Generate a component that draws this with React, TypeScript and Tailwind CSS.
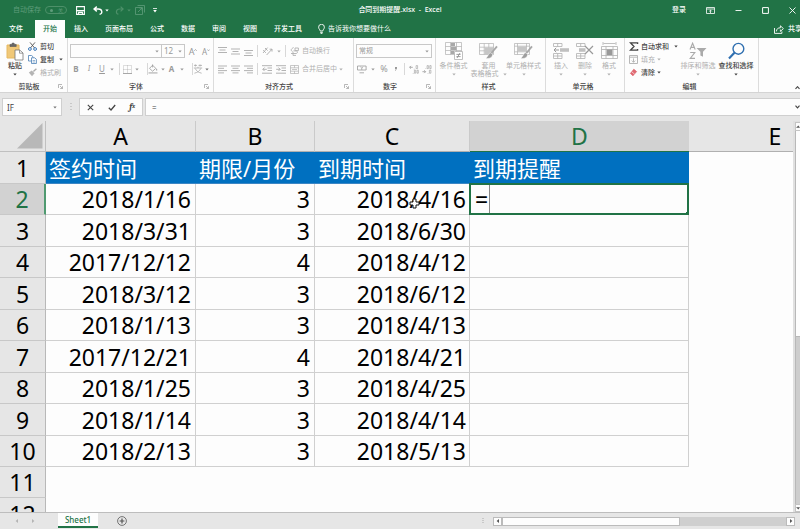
import type { ReactNode } from 'react';
import clsx from 'clsx';

type Row = { start: string; months: number; end: string };

const rows: Row[] = [
  { start: '2018/1/16', months: 3, end: '2018/4/16' },
  { start: '2018/3/31', months: 3, end: '2018/6/30' },
  { start: '2017/12/12', months: 4, end: '2018/4/12' },
  { start: '2018/3/12', months: 3, end: '2018/6/12' },
  { start: '2018/1/13', months: 3, end: '2018/4/13' },
  { start: '2017/12/21', months: 4, end: '2018/4/21' },
  { start: '2018/1/25', months: 3, end: '2018/4/25' },
  { start: '2018/1/14', months: 3, end: '2018/4/14' },
  { start: '2018/2/13', months: 3, end: '2018/5/13' },
];

const tabs = ['文件', '开始', '插入', '页面布局', '公式', '数据', '审阅', '视图', '开发工具'];

/* ---------- small drawing helpers ---------- */

function Icon({ w, h, children, className }: { w: number; h: number; children: ReactNode; className?: string }) {
  return (
    <svg
      width={w}
      height={h}
      viewBox={`0 0 ${w} ${h}`}
      fill="none"
      stroke="currentColor"
      strokeWidth="1"
      className={clsx('shrink-0', className)}
      aria-hidden="true"
    >
      {children}
    </svg>
  );
}

function Caret({ className }: { className?: string }) {
  return (
    <Icon w={4} h={3} className={className}>
      <path d="M0.3 0.5h3.4L2 2.6z" fill="currentColor" stroke="none" />
    </Icon>
  );
}

function Sep() {
  return <span className="h-3 w-px shrink-0 bg-[#d8d8d8]" />;
}

function Lines({ d }: { d: string }) {
  return (
    <Icon w={9} h={9}>
      <path d={d} strokeWidth="0.9" />
    </Icon>
  );
}

function IconButton({ label, children, className }: { label: string; children: ReactNode; className?: string }) {
  return (
    <button type="button" aria-label={label} className={clsx('flex shrink-0 items-center justify-center', className)}>
      {children}
    </button>
  );
}

/* ---------- ribbon ---------- */

type GroupProps = { title: string; width: string; launcher?: boolean; children: ReactNode };

function Group({ title, width, launcher, children }: GroupProps) {
  return (
    <section className={clsx('flex shrink-0 flex-col border-r border-[#dcdcdc]', width)} aria-label={title}>
      <div className="flex-1">{children}</div>
      <div className="flex h-[11px] items-center pr-1">
        <span className="flex-1 text-center font-medium text-[#444]">{title}</span>
        {launcher && (
          <IconButton label={`${title}设置`} className="text-[#999]">
            <Icon w={5} h={5}>
              <path d="M0.5 4V0.5H4M2 2l2.4 2.4M4.5 2.2v2.3H2.2" strokeWidth="0.7" />
            </Icon>
          </IconButton>
        )}
      </div>
    </section>
  );
}

type BigProps = { label: string; second?: string; width: string; active?: boolean; children: ReactNode };

function BigButton({ label, second, width, active, children }: BigProps) {
  return (
    <button
      type="button"
      className={clsx(
        'flex shrink-0 flex-col items-center whitespace-nowrap',
        width,
        active ? 'font-medium text-[#444]' : 'text-[#b0b0b0]',
      )}
    >
      <span className="mb-[2px] flex h-[18px] items-center">{children}</span>
      <span className="h-2">{label}</span>
      <span className="flex h-2 items-center gap-1">
        {second}
        <Caret />
      </span>
    </button>
  );
}

type SmallProps = { label: string; caret?: boolean; active?: boolean; wide?: boolean; children: ReactNode };

function SmallButton({ label, caret, active, wide, children }: SmallProps) {
  return (
    <button
      type="button"
      className={clsx(
        'flex h-[13px] items-center whitespace-nowrap',
        active ? 'font-medium text-[#444]' : 'text-[#b0b0b0]',
      )}
    >
      <span className="flex w-3 items-center">{children}</span>
      {label}
      {caret && <Caret className={wide ? 'ml-[5px]' : 'ml-[2px]'} />}
    </button>
  );
}

function ClipboardGroup() {
  return (
    <Group title="剪贴板" width="w-[68px]" launcher>
      <div className="flex pt-[2px]">
        <div className="pt-[2px] pl-1">
          <BigButton label="粘贴" width="w-[22px]" active>
            <Icon w={18} h={19}>
              <path d="M1 3h12v13H1z" fill="#f0c878" stroke="#e6b860" />
              <path d="M4 4.5V2.4h1.7a1.4 1.4 0 0 1 2.8 0h1.7v2.1z" fill="#666" stroke="#555" strokeWidth="0.6" />
              <path d="M9 8h4.7L17 11v7H9z" fill="#fff" stroke="#777" strokeWidth="0.8" />
              <path d="M13.5 8v3.2H17" stroke="#777" strokeWidth="0.7" />
            </Icon>
          </BigButton>
        </div>
        <div className="pl-[2px]">
          <SmallButton label="剪切" active>
            <Icon w={9} h={9}>
              <path d="M2 0.4 6.6 6M7 0.4 2.4 6" stroke="#555" strokeWidth="0.9" />
              <circle cx="1.9" cy="7" r="1.4" stroke="#3b78b8" />
              <circle cx="7.1" cy="7" r="1.4" stroke="#3b78b8" />
            </Icon>
          </SmallButton>
          <SmallButton label="复制" caret wide active>
            <Icon w={9} h={9}>
              <path d="M0.5 0.5h3.2L5 1.8V6H0.5z" fill="#fff" stroke="#4a7fb5" strokeWidth="0.8" />
              <path d="M3.5 2.8h3.2L8.4 4.3v4.2H3.5z" fill="#fff" stroke="#4a7fb5" strokeWidth="0.8" />
              <path d="M4.6 5.5h2.6M4.6 7h2.6" stroke="#4a7fb5" strokeWidth="0.6" />
            </Icon>
          </SmallButton>
          <SmallButton label="格式刷">
            <Icon w={9} h={9}>
              <path d="M8.4 0.8 5.4 3.6" stroke="#aaa" strokeWidth="1.4" />
              <path d="M3.8 2.4 6.6 5.2 4 8.2 0.8 4.6z" fill="#b4b4b4" stroke="none" />
            </Icon>
          </SmallButton>
        </div>
      </div>
    </Group>
  );
}

function FontGroup() {
  return (
    <Group title="字体" width="w-[146px]" launcher>
      <div className="flex h-5 items-end pl-[2px] text-[#999]">
        <div className="relative w-[92px]">
          <select aria-label="字体名称" className="block h-[14px] w-full appearance-none border border-[#c8c8c8] bg-transparent" />
          <Caret className="pointer-events-none absolute top-[6px] right-[3px]" />
        </div>
        <div className="relative -ml-px w-6">
          <select
            aria-label="字号"
            className="block h-[14px] w-full appearance-none border border-[#c8c8c8] bg-transparent pl-[2px] text-[8px] leading-3"
          >
            <option>12</option>
          </select>
          <Caret className="pointer-events-none absolute top-[6px] right-[3px]" />
        </div>
        <IconButton label="增大字号" className="ml-1 h-[13px] w-2 text-[9px]">
          A
          <Icon w={3} h={6}>
            <path d="M0.3 1.8 1.5 0.5 2.7 1.8" strokeWidth="0.8" />
          </Icon>
        </IconButton>
        <IconButton label="减小字号" className="ml-[5px] h-[13px] w-2 text-[8px]">
          A
          <Icon w={3} h={6}>
            <path d="M0.3 0.5 1.5 1.8 2.7 0.5" strokeWidth="0.8" />
          </Icon>
        </IconButton>
      </div>
      <div className="mt-1 flex h-[14px] items-center text-[8px] text-[#999]">
        <IconButton label="加粗" className="ml-[5px] w-[6px] font-bold">B</IconButton>
        <IconButton label="倾斜" className="ml-[7px] w-[6px] font-serif italic">I</IconButton>
        <IconButton label="下划线" className="ml-[7px] w-[6px] underline">U</IconButton>
        <Caret className="mr-[5px] ml-[5px]" />
        <Sep />
        <IconButton label="边框" className="ml-[3px]">
          <Icon w={9} h={9}>
            <path d="M0.5 0.5h8v8h-8zM4.5 0.5v8M0.5 4.5h8" strokeWidth="0.6" strokeDasharray="1 1" />
            <path d="M0 8.5h9" strokeWidth="0.8" />
          </Icon>
        </IconButton>
        <Caret className="mr-2 ml-[3px]" />
        <Sep />
        <IconButton label="填充颜色">
          <Icon w={10} h={10}>
            <path d="M1.5 4.4 4.6 1.2l3.2 3.2-3.2 2.8zM4.6 3.4V0.4" strokeWidth="0.8" />
            <path d="M8.7 4.4c.8 1 .8 2 0 2.2s-.8-1.2 0-2.2z" fill="currentColor" stroke="none" />
            <path d="M0.5 8.9h9" stroke="#c4c4c4" strokeWidth="1.6" />
          </Icon>
        </IconButton>
        <Caret className="mr-[3px] ml-[3px]" />
        <IconButton label="字体颜色" className="w-[7px] font-bold">A</IconButton>
        <Caret className="mr-2 ml-[5px]" />
        <Sep />
        <IconButton label="拼音指南" className="text-[#aaa]">
          <Icon w={10} h={10}>
            <path d="M1 1.4h3M5.5 1.4h3.5M2.4 0.5v2M7 0.5v2M0.8 4h8.4M5 2.8V4M2.2 4.4c1.2 2.6 3 4 6.4 4.8M7.8 4.4C6.6 7 4.8 8.4 1.4 9.2" strokeWidth="0.8" />
          </Icon>
        </IconButton>
        <Caret className="ml-[2px] text-[#777]" />
      </div>
    </Group>
  );
}

function AlignGroup() {
  return (
    <Group title="对齐方式" width="w-[140px]" launcher>
      <div className="flex h-[26px] items-center gap-1 pl-1 text-[#aaa]">
        <IconButton label="顶端对齐"><Lines d="M0 0.5h9M1.5 3h6M0 5.5h9" /></IconButton>
        <IconButton label="垂直居中"><Lines d="M0 2h9M1.5 4.5h6M0 7h9" /></IconButton>
        <IconButton label="底端对齐"><Lines d="M0 3.5h9M1.5 6h6M0 8.5h9" /></IconButton>
        <Sep />
        <IconButton label="方向">
          <Icon w={11} h={10}>
            <path d="M1 7 5.6 1.6M3 2l2.6 2.6M1.2 4.2l2.6 2.6M4.6 9 10 3.2M10 5.6V3.2H7.6" strokeWidth="0.9" />
          </Icon>
        </IconButton>
        <Caret />
        <Sep />
        <SmallButton label="自动换行">
          <Icon w={9} h={9}>
            <path d="M3.6 0.5c-3 1.6-3 3.2-1 4M5 1h3.4v2.6H5zM1 6.5h5.5a1.4 1.4 0 0 0 0-2.6H3.4M3 5v3.4h3" strokeWidth="0.9" />
          </Icon>
        </SmallButton>
      </div>
      <div className="flex h-[10px] items-center gap-1 pl-1 text-[#aaa]">
        <IconButton label="左对齐"><Lines d="M0 1h9M0 3.3h6M0 5.6h9M0 7.9h6" /></IconButton>
        <IconButton label="居中"><Lines d="M0 1h9M1.5 3.3h6M0 5.6h9M1.5 7.9h6" /></IconButton>
        <IconButton label="右对齐"><Lines d="M0 1h9M3 3.3h6M0 5.6h9M3 7.9h6" /></IconButton>
        <Sep />
        <IconButton label="减少缩进量">
          <Icon w={10} h={9}>
            <path d="M0 0.7h10M5.5 3h4.5M5.5 5.5h4.5M0 8.2h10M0.8 4.3h4M2.6 2.5.8 4.3l1.8 1.8" strokeWidth="0.9" />
          </Icon>
        </IconButton>
        <IconButton label="增加缩进量">
          <Icon w={10} h={9}>
            <path d="M0 0.7h10M5.5 3h4.5M5.5 5.5h4.5M0 8.2h10M0.2 4.3h4M2.4 2.5l1.8 1.8-1.8 1.8" strokeWidth="0.9" />
          </Icon>
        </IconButton>
        <SmallButton label="合并后居中" caret>
          <Icon w={9} h={9}>
            <path d="M0.5 0.5h8v8h-8zM0.5 2.8h8M0.5 6.2h8M4.5 0.5v2.3M4.5 6.2v2.3M2 4.5h5" strokeWidth="0.7" />
          </Icon>
        </SmallButton>
      </div>
    </Group>
  );
}

function NumberGroup() {
  return (
    <Group title="数字" width="w-[82px]" launcher>
      <div className="relative mr-[3px] ml-[2px] pt-[6px] text-[#999]">
        <select
          aria-label="数字格式"
          className="block h-[14px] w-full appearance-none border border-[#c8c8c8] bg-transparent pl-[2px] leading-3"
        >
          <option>常规</option>
        </select>
        <Caret className="pointer-events-none absolute top-3 right-[3px]" />
      </div>
      <div className="mt-1 flex h-[14px] items-center pl-[3px] text-[#999]">
        <IconButton label="会计数字格式">
          <Icon w={10} h={9}>
            <path d="M0.5 1h8.6v4H0.5zM2.5 7.8h4.5" strokeWidth="0.8" />
            <path d="M3.4 1.8 4.8 3l1.4-1.2M4.8 3v2" strokeWidth="0.7" />
          </Icon>
        </IconButton>
        <Caret className="ml-1" />
        <IconButton label="百分比样式" className="ml-[5px] w-2 text-[9px]">%</IconButton>
        <IconButton label="千位分隔样式" className="ml-[6px] w-1">
          <Icon w={4} h={6}>
            <path d="M1 1h2v1.6L1.4 5H1l.8-2H1z" fill="currentColor" stroke="none" />
          </Icon>
        </IconButton>
        <span className="w-[6px]" />
        <Sep />
        <IconButton label="增加小数位数" className="ml-1">
          <Icon w={10} h={9}>
            <path d="M0.6 2.3h3.2M2 0.9.6 2.3 2 3.7M5.2 3.8v.5M4.2 8v.5" strokeWidth="0.8" />
            <path d="M7.1 0.6h1.5v3H7.1zM5.4 5.2h1.3v3H5.4zM8 5.2h1.3v3H8z" strokeWidth="0.6" />
          </Icon>
        </IconButton>
        <IconButton label="减少小数位数" className="ml-[3px]">
          <Icon w={10} h={9}>
            <path d="M0.4 6.7h3.2M2.2 5.3l1.4 1.4-1.4 1.4M3.8 3.4v.5M6 8v.5" strokeWidth="0.8" />
            <path d="M5.1 0.6h1.3v3H5.1zM7.8 0.6h1.3v3H7.8zM7.4 5.2h1.5v3H7.4z" strokeWidth="0.6" />
          </Icon>
        </IconButton>
      </div>
    </Group>
  );
}

function Brush() {
  return (
    <>
      <path d="M18 4.4 11.6 12" stroke="#a8a8a8" strokeWidth="1.8" />
      <path d="M11.8 10.8c-2.4 0-2.4 3.6-5 5.4 3.4.8 6.6-.4 6.8-3.8z" fill="#9e9e9e" stroke="#fff" strokeWidth="0.5" />
    </>
  );
}

function StyleGroup() {
  return (
    <Group title="样式" width="w-[110px]">
      <div className="flex pt-1">
        <BigButton label="条件格式" width="w-[35px]">
          <Icon w={18} h={18}>
            <path d="M0.5 0.5h16v12H0.5zM0.5 4.5h16M0.5 8.5h16M5.5 0.5v12M11.5 0.5v12" strokeWidth="0.7" />
            <path d="M6 1h4v3H6zM6 5h5.5v3H6zM6 9h3v3H6z" fill="#a8a8a8" stroke="none" />
            <path d="M9.5 9.5h8v8h-8z" fill="#fff" strokeWidth="0.8" />
            <path d="M11.4 12.4h4.2M11.4 14.6h4.2M15 11l-3 5" stroke="#888" strokeWidth="0.8" />
          </Icon>
        </BigButton>
        <BigButton label="套用" second="表格格式" width="w-[35px]">
          <Icon w={19} h={18}>
            <path d="M0.5 1.5h14v11H0.5zM0.5 5.2h14M0.5 8.8h14M5.2 1.5v11M9.8 1.5v11" strokeWidth="0.7" />
            <path d="M5.4 5.4h9v7h-9z" fill="#c6c6c6" stroke="none" />
            <Brush />
          </Icon>
        </BigButton>
        <BigButton label="单元格样式" width="w-[35px]">
          <Icon w={19} h={18}>
            <path d="M0.5 1.5h15v11H0.5zM0.5 4.2h15M0.5 9.8h15M3.5 1.5v11M12.5 1.5v11" strokeWidth="0.7" />
            <path d="M3.7 4.4h8.6v5.2H3.7z" fill="#c6c6c6" stroke="none" />
            <Brush />
          </Icon>
        </BigButton>
      </div>
    </Group>
  );
}

function CellGroup() {
  return (
    <Group title="单元格" width="w-[79px]">
      <div className="flex pt-1 pl-[3px]">
        <BigButton label="插入" width="w-6">
          <Icon w={16} h={18}>
            <path d="M0.5 1.5h8.5v3H0.5zM4.7 1.5v3M0.5 11.5h8.5v5H0.5zM4.7 11.5v5M0.5 14h8.5" strokeWidth="0.8" />
            <path d="M7 6.2h9v3.6H7z" fill="#c0c0c0" stroke="none" />
            <path d="M1 8h5M3.2 5.8 1 8l2.2 2.2" stroke="#999" />
          </Icon>
        </BigButton>
        <BigButton label="删除" width="w-6">
          <Icon w={18} h={18}>
            <path d="M0.5 1.5h8.5v3H0.5zM4.7 1.5v3M0.5 11.5h8.5v5H0.5zM4.7 11.5v5M0.5 14h8.5" strokeWidth="0.8" />
            <path d="M3 6.2h6.5v3.6H3z" fill="#c0c0c0" stroke="none" />
            <path d="m9 4 8 8M17 4l-8 8" stroke="#999" strokeWidth="1.2" />
          </Icon>
        </BigButton>
        <BigButton label="格式" width="w-6">
          <Icon w={17} h={18}>
            <path d="M2 0v3M15 0v3M2.5 1.5h12" strokeWidth="0.8" />
            <path d="M0.5 4.5h16v12H0.5zM0.5 7.5h16M0.5 13.5h16M5 4.5v12M12 4.5v12" strokeWidth="0.8" />
            <path d="M5.6 7.5h5.8v5.6H5.6z" fill="#999" stroke="none" />
          </Icon>
        </BigButton>
      </div>
    </Group>
  );
}

function EditGroup() {
  return (
    <Group title="编辑" width="w-[134px]">
      <div className="flex pt-[2px] pl-1">
        <div className="w-[50px]">
          <SmallButton label="自动求和" caret wide active>
            <Icon w={10} h={9}>
              <path d="M8.6 2V0.8H1.4L5 4.5 1.4 8.2h7.2V7" strokeWidth="1.3" />
            </Icon>
          </SmallButton>
          <SmallButton label="填充" caret>
            <Icon w={10} h={9}>
              <path d="M0.5 0.5h8v8h-8zM0.5 2.2h8M4.5 3.4v3.8M2.8 5.6l1.7 1.7 1.7-1.7" strokeWidth="0.9" />
            </Icon>
          </SmallButton>
          <SmallButton label="清除" caret active>
            <Icon w={10} h={9}>
              <path d="M4.8 1.2 7.6 3.6 4 7.8 1.4 5.4z" fill="#e06a72" stroke="#d9505a" strokeWidth="0.6" />
              <path d="m2.8 3.8 2.8 2.4" stroke="#fff" strokeWidth="0.6" />
            </Icon>
          </SmallButton>
        </div>
        <div className="flex pt-[2px]">
          <BigButton label="排序和筛选" width="w-[38px]">
            <Icon w={18} h={18}>
              <path d="M1 7.5 3.6 1.2 6.2 7.5M2 5.4h3.2M1.2 10.5h4.6L1.2 16.4h4.8" stroke="#aaa" strokeWidth="1.1" />
              <path d="M7.5 6h10L14 9.8v5l-2.6-1.4V9.8z" fill="#aaa" stroke="none" />
            </Icon>
          </BigButton>
          <BigButton label="查找和选择" width="w-[38px]" active>
            <Icon w={17} h={18}>
              <circle cx="10.4" cy="6.8" r="5.4" stroke="#2f6fb0" strokeWidth="1.4" />
              <path d="M6.4 10.8 1 16.4" stroke="#2f6fb0" strokeWidth="2.2" />
            </Icon>
          </BigButton>
        </div>
      </div>
    </Group>
  );
}

/* ---------- window chrome ---------- */

function TitleBar() {
  return (
    <header className="grid h-5 grid-cols-[1fr_auto_1fr] items-center bg-[#217346] text-white">
      <div className="flex items-center pl-[13px]">
        <label htmlFor="autosave" className="text-[#5f9d7b]">自动保存</label>
        <span className="relative ml-1 flex h-2 w-[22px] items-center rounded-full border border-[#4d9069]">
          <input id="autosave" type="checkbox" className="absolute inset-0 opacity-0" />
          <span className="ml-1 size-[3px] rounded-full bg-[#5f9d7b]" />
          <span className="ml-[5px] text-[5px] leading-none text-[#5f9d7b]">关</span>
        </span>
        <IconButton label="保存" className="ml-[9px]">
          <Icon w={9} h={9}>
            <path d="M0.6 0.6h7.8v7.8H0.6z" strokeWidth="1.1" />
            <path d="M0.6 4.6h7.8M2.6 8.4V6.4h3.8v2" strokeWidth="1.1" />
          </Icon>
        </IconButton>
        <IconButton label="撤消" className="ml-2">
          <Icon w={10} h={9}>
            <path d="M3.8 0.6 1 3l2.8 2.4M1.2 3h4.2c4.2 0 4.4 5 1.2 5.2" strokeWidth="1.4" />
          </Icon>
        </IconButton>
        <Caret className="ml-[2px]" />
        <IconButton label="恢复" className="ml-[6px] text-[#4d9069]">
          <Icon w={9} h={9}>
            <path d="M5.6 0.6 8.2 3 5.6 5.4M8 3H4.6C.6 3 .6 8 3.4 8.2" strokeWidth="1.2" />
          </Icon>
        </IconButton>
        <Caret className="ml-[3px] text-[#4d9069]" />
        <IconButton label="触摸模式" className="ml-1 text-[#5f9d7b]">
          <Icon w={10} h={10}>
            <path d="M0.5 2.5h7v7h-7zM2.5 0.5h7v7M3 7l4-4M4.4 3H7v2.6" strokeWidth="0.8" />
          </Icon>
        </IconButton>
        <IconButton label="自定义快速访问工具栏" className="ml-2">
          <Icon w={4} h={5}>
            <path d="M0 0.5h4" strokeWidth="0.8" />
            <path d="M0.2 2h3.6L2 4.4z" fill="currentColor" stroke="none" />
          </Icon>
        </IconButton>
      </div>
      <h1 className="font-medium">合同到期提醒.xlsx&nbsp; -&nbsp; Excel</h1>
      <div className="flex items-center justify-end pr-1">
        <button type="button" className="mr-5 font-medium">登录</button>
        <IconButton label="功能区显示选项" className="mr-5">
          <Icon w={9} h={7}>
            <path d="M0.5 0.5h8v6h-8zM0.5 2h8M4.5 6V3.2M3.2 4.4l1.3-1.3 1.3 1.3" strokeWidth="0.8" />
          </Icon>
        </IconButton>
        <IconButton label="最小化" className="mr-5">
          <Icon w={7} h={7}><path d="M0.5 3.5h6" strokeWidth="0.9" /></Icon>
        </IconButton>
        <IconButton label="最大化" className="mr-5">
          <Icon w={7} h={7}><path d="M0.6 0.6h5.8v5.8H0.6z" /></Icon>
        </IconButton>
        <IconButton label="关闭">
          <Icon w={7} h={7}><path d="m0.5 0.5 6 6M6.5 0.5l-6 6" strokeWidth="0.9" /></Icon>
        </IconButton>
      </div>
    </header>
  );
}

function TabBar() {
  return (
    <nav className="flex h-[18px] gap-px overflow-hidden bg-[#217346] pl-px font-medium whitespace-nowrap text-white">
      {tabs.map((tab) => (
        <button
          key={tab}
          type="button"
          className={clsx('shrink-0 px-2', tab === '开始' && 'bg-[#fdfdfd] text-[#217346]', tab === '文件' && 'mr-[3px]')}
        >
          {tab}
        </button>
      ))}
      <button type="button" className="ml-[7px] flex items-center gap-[3px] font-normal">
        <Icon w={7} h={10}>
          <path d="M2.2 7C2.2 5.6.6 5 .6 3.2a2.8 2.8 0 0 1 5.8 0C6.4 5 4.8 5.6 4.8 7zM2.2 8.4h2.6M2.6 9.6h1.8" strokeWidth="0.9" />
        </Icon>
        告诉我你想要做什么
      </button>
      <button type="button" className="-mr-[2px] ml-auto flex shrink-0 items-center gap-1">
        <Icon w={10} h={9}>
          <path d="M0.5 3v5.4h7.4V6.4M2.4 6.4c.2-2.6 1.6-3.6 4-3.6V0.8l3 2.8-3 2.8V4.6" strokeWidth="0.9" />
        </Icon>
        共享
      </button>
    </nav>
  );
}

function FormulaBar() {
  return (
    <div className="flex h-[29px] items-start border-t border-[#d4d4d4] bg-[#e6e6e6] pt-[5px] pl-[2px] text-[#444]">
      <div className="flex h-[18px] w-[60px] items-center border border-[#cfcfcf] bg-[#fdfdfd] pr-1">
        <input aria-label="名称框" defaultValue="IF" className="min-w-0 flex-1 bg-transparent pl-1 text-[8px]" />
        <Caret className="text-[#777]" />
      </div>
      <span className="flex h-[18px] w-[17px] items-center justify-center">
        <Icon w={2} h={8} className="text-[#aaa]"><path d="M1 0v8" strokeDasharray="1 2" /></Icon>
      </span>
      <div className="flex h-[18px] w-16 items-center justify-around border border-[#cfcfcf] bg-[#fdfdfd]">
        <IconButton label="取消">
          <Icon w={7} h={7}><path d="m0.8 0.8 5.4 5.4M6.2 0.8.8 6.2" strokeWidth="1.1" /></Icon>
        </IconButton>
        <IconButton label="输入">
          <Icon w={8} h={7}><path d="m0.8 3.8 2.2 2.2L7.2 1" strokeWidth="1.3" /></Icon>
        </IconButton>
        <IconButton label="插入函数" className="font-serif text-[9px] font-bold italic">
          f<span className="text-[6px]">x</span>
        </IconButton>
      </div>
      <div className="ml-[2px] flex h-[18px] flex-1 items-center overflow-hidden border border-r-0 border-[#cfcfcf] bg-[#fdfdfd]">
        <input aria-label="编辑栏" defaultValue="=" className="min-w-0 flex-1 bg-transparent pl-[6px] text-[8px]" />
        <Icon w={5} h={4}><path d="M0.5 0.7 2.5 2.9 4.5 0.7" strokeWidth="1.1" /></Icon>
      </div>
    </div>
  );
}

/* ---------- sheet ---------- */

const dataCell = 'border-r border-b border-[#d0d0d0] p-0';
const titleCell = 'border-b border-[#3c86c4] bg-[#0070c0] p-0 pl-[3px] text-left text-[22px] font-normal text-white';
const rowHead = 'border-r border-b border-r-[#b8b8b8] border-b-[#c8c8c8] bg-[#e6e6e6] p-0 text-center font-normal';

function Sheet() {
  return (
    <div className="min-w-0 flex-1 overflow-hidden bg-[#fdfdfd]">
      <table className="w-[861px] table-fixed border-separate border-spacing-0 text-[23px] leading-[30px] whitespace-nowrap text-black">
        <colgroup>
          <col className="w-[46px]" />
          <col className="w-[150px]" />
          <col className="w-[119px]" />
          <col className="w-[155px]" />
          <col className="w-[219px]" />
          <col className="w-[172px]" />
        </colgroup>
        <thead>
          <tr className="h-[31px]">
            <td className="border-r border-b border-[#c0c0c0] bg-[#e6e6e6] p-0">
              <Icon w={26} h={26} className="ml-[17px]">
                <path d="M25.5 0v25.5H0z" fill="#b8b8b8" stroke="none" />
              </Icon>
            </td>
            {['A', 'B', 'C', 'D', 'E'].map((col) => (
              <th
                key={col}
                scope="col"
                className={clsx(
                  'border-b p-0 font-normal',
                  col === 'D' ? 'border-[#217346] bg-[#d2d2d2] text-[#217346]' : 'border-[#b0b0b0] bg-[#e6e6e6]',
                  col !== 'D' && col !== 'E' && 'border-r border-r-[#cacaca]',
                )}
              >
                {col}
              </th>
            ))}
          </tr>
        </thead>
        <tbody>
          <tr className="h-8">
            <th scope="row" className={rowHead}>1</th>
            <th className={titleCell}>签约时间</th>
            <th className={titleCell}>期限/月份</th>
            <th className={titleCell}>到期时间</th>
            <th className={titleCell}>到期提醒</th>
          </tr>
          {rows.map((row, i) => (
            <tr key={i} className="odd:h-8 even:h-[31px]">
              <th
                scope="row"
                className={
                  i === 0
                    ? 'border-r-2 border-b border-r-[#4f9a70] border-b-[#c8c8c8] bg-[#d2d2d2] p-0 text-center font-normal text-[#217346]'
                    : rowHead
                }
              >
                {i + 2}
              </th>
              <td className={clsx(dataCell, 'pr-1 text-right')}>{row.start}</td>
              <td className={clsx(dataCell, 'pr-1 text-right')}>{row.months}</td>
              <td className={clsx(dataCell, 'relative pr-[3px] text-right')}>
                {row.end}
                {i === 0 && (
                  <Icon w={11} h={11} className="absolute top-[14px] left-[94px]">
                    <path d="M4 1h3v3h3v3H7v3H4V7H1V4h3z" fill="#fff" stroke="#111" />
                  </Icon>
                )}
              </td>
              <td className={clsx(dataCell, 'relative')}>
                {i === 0 && (
                  <div className="absolute -top-px -right-px -bottom-px -left-px flex items-center border-2 border-[#217346]">
                    <input aria-label="D2" defaultValue="=" className="h-full w-[19px] border-r border-[#888] bg-transparent pl-1" />
                    <span className="absolute -right-[2px] -bottom-[2px] size-[3px] bg-[#217346]" />
                  </div>
                )}
              </td>
            </tr>
          ))}
          <tr className="h-[31px]">
            <th scope="row" className={rowHead}>11</th>
          </tr>
          <tr className="h-8">
            <th scope="row" className={rowHead}>12</th>
          </tr>
        </tbody>
      </table>
    </div>
  );
}

function VerticalScroll() {
  return (
    <div className="flex w-[7px] shrink-0 flex-col items-end bg-[#e0e0e0] pt-px text-[#555]">
      <IconButton label="向上滚动" className="h-[9px] w-[5px] border border-r-0 border-[#c4c4c4] bg-[#fdfdfd]">
        <Icon w={4} h={3}><path d="M0 2.7h4L2.4 0.4z" fill="currentColor" stroke="none" /></Icon>
      </IconButton>
      <div className="w-[5px] flex-[11] border-l border-[#b8b8b8] bg-[#fdfdfd]" />
      <div className="w-[5px] flex-[9] border-t border-l border-[#b8b8b8] bg-[#cdcdcd]" />
      <IconButton label="向下滚动" className="h-2 w-[5px] border border-r-0 border-[#c4c4c4] bg-[#fdfdfd]">
        <Icon w={4} h={3}><path d="M0 0.3h4L2.4 2.6z" fill="currentColor" stroke="none" /></Icon>
      </IconButton>
    </div>
  );
}

function SheetBar() {
  return (
    <footer className="flex h-[17px] shrink-0 border-t border-[#bdbdbd] bg-[#e6e6e6] text-[#555]">
      <div className="flex w-[58px] items-center gap-3 pl-[15px] text-[#b4b4b4]">
        <IconButton label="上一张工作表">
          <Icon w={4} h={4}><path d="M3 0v4L0.6 2z" fill="currentColor" stroke="none" /></Icon>
        </IconButton>
        <IconButton label="下一张工作表">
          <Icon w={4} h={4}><path d="M1 0v4l2.4-2z" fill="currentColor" stroke="none" /></Icon>
        </IconButton>
      </div>
      <button type="button" className="h-[15px] w-10 border-b-2 border-[#217346] bg-[#fdfdfd] text-[8px] font-medium text-[#217346]">
        Sheet1
      </button>
      <IconButton label="新工作表" className="ml-[19px]">
        <Icon w={10} h={10}>
          <circle cx="5" cy="5" r="4.4" strokeWidth="0.8" />
          <path d="M5 2.6v4.8M2.6 5h4.8" strokeWidth="1.2" />
        </Icon>
      </IconButton>
      <div className="ml-auto flex w-2/5 items-center pr-[5px] pl-[2px]">
        <Icon w={2} h={6} className="mr-[9px] text-[#aaa]"><path d="M1 0v6" strokeDasharray="1 1" /></Icon>
        <IconButton label="向左滚动" className="h-[9px] w-[9px] border border-[#bbb] bg-[#fdfdfd]">
          <Icon w={4} h={4}><path d="M3 0v4L0.6 2z" fill="currentColor" stroke="none" /></Icon>
        </IconButton>
        <div className="h-[9px] flex-[5] border border-[#bbb] bg-[#fdfdfd]" />
        <div className="h-[9px] flex-[3] bg-[#cfcfcf]" />
        <IconButton label="向右滚动" className="h-[9px] w-[9px] border border-[#bbb] bg-[#fdfdfd]">
          <Icon w={4} h={4}><path d="M1 0v4l2.4-2z" fill="currentColor" stroke="none" /></Icon>
        </IconButton>
      </div>
    </footer>
  );
}

export default function App() {
  return (
    <div className="flex h-screen flex-col overflow-hidden bg-[#e6e6e6] font-['Noto_Sans','Noto_Sans_CJK_SC',sans-serif] text-[7px] leading-[8px]">
      <TitleBar />
      <TabBar />
      <div className="flex h-[54px] shrink-0 overflow-hidden bg-[#fdfdfd]">
        <ClipboardGroup />
        <FontGroup />
        <AlignGroup />
        <NumberGroup />
        <StyleGroup />
        <CellGroup />
        <EditGroup />
        <div className="flex flex-1 items-end justify-end pb-[2px] text-[#444]">
          <IconButton label="折叠功能区">
            <Icon w={5} h={4}><path d="M0.5 2.9 2.5 0.7 4.5 2.9" strokeWidth="1.1" /></Icon>
          </IconButton>
        </div>
      </div>
      <FormulaBar />
      <main className="flex min-h-0 flex-1">
        <Sheet />
        <VerticalScroll />
      </main>
      <SheetBar />
    </div>
  );
}
